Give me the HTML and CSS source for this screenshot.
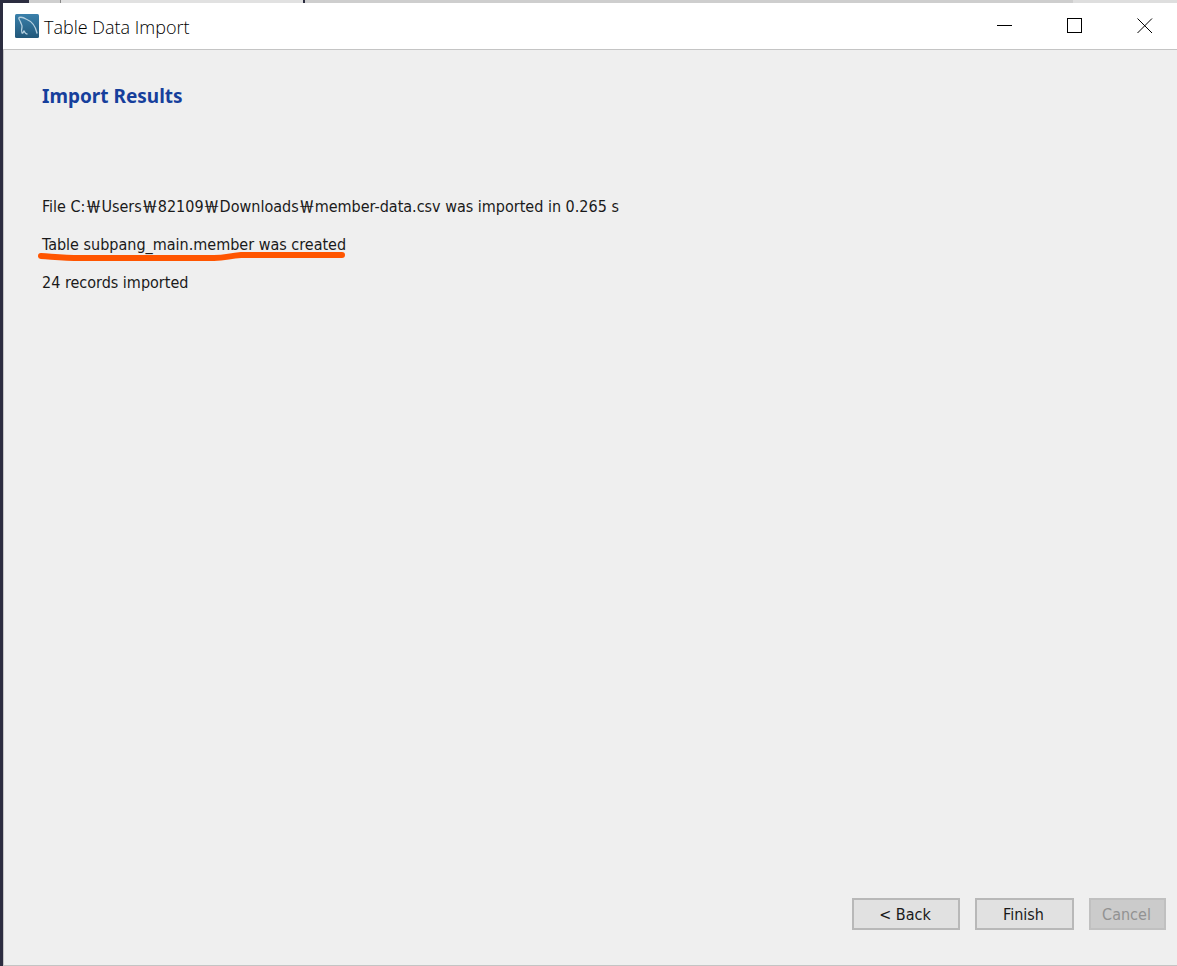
FILE: index.html
```html
<!DOCTYPE html>
<html lang="en">
<head>
<meta charset="utf-8">
<title>Table Data Import</title>
<link rel="stylesheet" href="styles.css">
</head>
<body>
<div class="backdrop" aria-hidden="true"><span class="backdrop-dark"></span><span class="backdrop-tab"></span><span class="backdrop-panel"></span><span class="backdrop-toolbar"></span><span class="backdrop-end"></span></div>
<div class="window">
  <header class="titlebar">
    <svg class="app-icon" viewBox="0 0 24 24" aria-hidden="true">
      <defs><linearGradient id="sea" x1="0" y1="0" x2="0" y2="1"><stop offset="0" stop-color="#3a80ab"/><stop offset="1" stop-color="#22587a"/></linearGradient></defs>
      <rect width="24" height="24" rx="1.5" fill="url(#sea)"/>
      <g fill="none" stroke="#b4cfdf" stroke-width="1.3" stroke-linecap="round" stroke-linejoin="round">
        <path d="M22 19C20.500 12 16 7 11 5C8 3 6 3 4 3.500C3 5 5 6 5.500 8C6 10 7.500 11 7 13C6.500 15 6 17 7 19C8 20 8.500 17 9 17C10 18 10 20 12 20"/>
      </g>
    </svg>
    <h1 class="title">Table Data Import</h1>
    <div class="controls">
      <button class="control" aria-label="Minimize"><svg class="glyph" viewBox="0 0 16 16"><path d="M0 7.500H15"/></svg></button>
      <button class="control" aria-label="Maximize"><svg class="glyph" viewBox="0 0 16 16"><path d="M.5.500H14.500V14.500H.5Z"/></svg></button>
      <button class="control" aria-label="Close"><svg class="glyph" viewBox="0 0 16 16"><path class="cross" d="M.5.500L15 15M15 .5L.5 15"/></svg></button>
    </div>
  </header>
  <main class="page">
    <h2 class="heading">Import Results</h2>
    <div class="results">
      <p class="result">File C:<span class="won">￦</span>Users<span class="won">￦</span>82109<span class="won">￦</span>Downloads<span class="won">￦</span>member-data.csv was imported in 0.265 s</p>
      <p class="result marked">Table subpang_main.member was created
        <svg class="stroke" viewBox="0 0 308 12" aria-hidden="true"><path d="M3 4C18 5 26 6 42 6H176C188 6 190 4 203 3H304"/></svg></p>
      <p class="result">24 records imported</p>
    </div>
    <footer class="actions">
      <button class="action back">&lt; Back</button>
      <button class="action finish">Finish</button>
      <button class="action cancel" disabled>Cancel</button>
    </footer>
  </main>
</div>
</body>
</html>
```

FILE: styles.css
```css
* { box-sizing: border-box; }
body {
  margin: 0;
  min-height: 100vh;
  display: flex;
  flex-direction: column;
  background: #2c2d40;
  font-family: "DejaVu Sans Condensed", "Noto Sans CJK KR", sans-serif;
  color: #1a1a1a;
}
h1, h2, p { margin: 0; }
.backdrop { display: flex; height: 3px; background: #dedede; }
.backdrop-dark { width: 29px; background: #2c2d40; }
.backdrop-tab { width: 32px; background: #cfcfcf; border-right: 1px solid #888; }
.backdrop-panel { width: 244px; background: #e1e1e1; border-right: 2px solid #2c2d40; }
.backdrop-toolbar { flex: 1; background: #cecece; }
.backdrop-end { width: 104px; background: #dedede; }
.window {
  flex: 1;
  display: flex;
  flex-direction: column;
  margin-left: 3px;
  background: #efefef;
}
.titlebar {
  display: flex;
  align-items: center;
  height: 47px;
  padding-left: 12px;
  background: #fff;
  border-bottom: 1px solid #c4c4c4;
}
.app-icon { width: 24px; height: 24px; }
.title { padding: 2px 0 0 5px; font-family: "Open Sans", sans-serif; font-size: 18px; font-weight: 360; line-height: 24px; color: #000; }
.controls { display: flex; margin-left: auto; }
.control {
  width: 70px;
  height: 46px;
  padding: 0 0 0 5px;
  display: grid;
  place-items: center;
  border: 0;
  background: none;
}
.glyph { width: 16px; height: 16px; fill: none; stroke: #000; shape-rendering: crispEdges; }
.cross { shape-rendering: auto; }
.page {
  flex: 1;
  display: flex;
  flex-direction: column;
  padding: 34px 11px 35px 38px;
  border-left: 1px solid #c4c4c4;
  border-bottom: 1px solid #c4c4c4;
}
.heading { font-family: "Noto Sans", sans-serif; font-size: 19px; line-height: 24px; color: #163f9c; }
.results { display: grid; gap: 14px; margin-top: 87px; }
.result { font-size: 16px; line-height: 24px; }
.won { font-family: "Noto Sans CJK KR", sans-serif; font-weight: 500; line-height: 1; }
.marked { position: relative; justify-self: start; }
.stroke {
  position: absolute;
  left: -4px;
  top: 19px;
  width: 308px;
  height: 12px;
  fill: none;
  stroke: #ff5500;
  stroke-width: 6;
  stroke-linecap: round;
  stroke-linejoin: round;
}
.actions { display: flex; justify-content: flex-end; gap: 15px; margin-top: auto; }
.action {
  height: 32px;
  padding: 2px 2px 0 0;
  font: 16px/24px "DejaVu Sans Condensed", sans-serif;
  color: #1a1a1a;
  background: #e1e1e1;
  border: 2px solid #b8b8b8;
}
.back { width: 108px; }
.finish { width: 99px; }
.cancel { width: 77px; color: #929292; background: #cbcbcb; border-color: #c0c0c0; }
```
